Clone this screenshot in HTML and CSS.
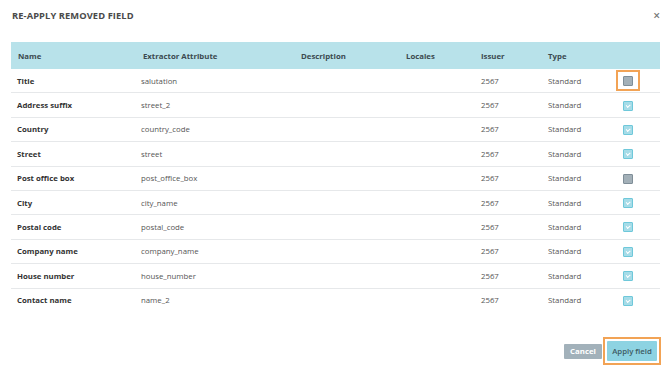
FILE: index.html
```html
<!DOCTYPE html>
<html>
<head>
<meta charset="utf-8">
<link rel="stylesheet" href="styles.css">
</head>
<body>
<div class="modal">
  <div class="modal-head">
    <h1 class="title">RE-APPLY REMOVED FIELD</h1>
    <span class="close">&#215;</span>
  </div>
  <table class="grid">
    <thead>
      <tr>
        <th class="c-name">Name</th>
        <th class="c-attr">Extractor Attribute</th>
        <th class="c-desc">Description</th>
        <th class="c-loc">Locales</th>
        <th class="c-iss">Issuer</th>
        <th class="c-type">Type</th>
        <th class="c-chk"></th>
      </tr>
    </thead>
    <tbody>
      <tr><td class="c-name">Title</td><td>salutation</td><td></td><td></td><td>2567</td><td>Standard</td><td class="c-chk"><span class="focus"><span class="cb"></span></span></td></tr>
      <tr><td class="c-name">Address suffix</td><td>street_2</td><td></td><td></td><td>2567</td><td>Standard</td><td class="c-chk"><span class="cb on"></span></td></tr>
      <tr><td class="c-name">Country</td><td>country_code</td><td></td><td></td><td>2567</td><td>Standard</td><td class="c-chk"><span class="cb on"></span></td></tr>
      <tr><td class="c-name">Street</td><td>street</td><td></td><td></td><td>2567</td><td>Standard</td><td class="c-chk"><span class="cb on"></span></td></tr>
      <tr><td class="c-name">Post office box</td><td>post_office_box</td><td></td><td></td><td>2567</td><td>Standard</td><td class="c-chk"><span class="cb"></span></td></tr>
      <tr><td class="c-name">City</td><td>city_name</td><td></td><td></td><td>2567</td><td>Standard</td><td class="c-chk"><span class="cb on"></span></td></tr>
      <tr><td class="c-name">Postal code</td><td>postal_code</td><td></td><td></td><td>2567</td><td>Standard</td><td class="c-chk"><span class="cb on"></span></td></tr>
      <tr><td class="c-name">Company name</td><td>company_name</td><td></td><td></td><td>2567</td><td>Standard</td><td class="c-chk"><span class="cb on"></span></td></tr>
      <tr><td class="c-name">House number</td><td>house_number</td><td></td><td></td><td>2567</td><td>Standard</td><td class="c-chk"><span class="cb on"></span></td></tr>
      <tr class="last"><td class="c-name">Contact name</td><td>name_2</td><td></td><td></td><td>2567</td><td>Standard</td><td class="c-chk"><span class="cb on"></span></td></tr>
    </tbody>
  </table>
  <div class="actions">
    <button class="btn cancel">Cancel</button>
    <span class="btn-focus"><button class="btn apply">Apply field</button></span>
  </div>
</div>
</body>
</html>
```
FILE: styles.css
```css
html, body {
  margin: 0;
  padding: 0;
  background: #fff;
}
body {
  font-family: "Open Sans", "Liberation Sans", sans-serif;
  color: #555;
}
.modal {
  width: 670px;
  height: 367px;
  padding: 0 9px 0 11px;
  box-sizing: border-box;
  display: flex;
  flex-direction: column;
}
.modal-head {
  display: flex;
  justify-content: space-between;
  align-items: center;
  height: 31px;
  padding-left: 1px;
}
.title {
  margin: 0;
  font-size: 9.3px;
  font-weight: 700;
  color: #4a4a4a;
  letter-spacing: 0.1px;
}
.close {
  font-size: 12px;
  color: #777;
  margin-right: 1px;
  font-weight: 600;
}
.grid {
  margin-top: 11px;
  width: 649px;
  border-collapse: collapse;
  font-size: 7.8px;
}
.grid th {
  background: #b8e2ea;
  height: 27px;
  text-align: left;
  font-weight: 700;
  color: #3b4a50;
  padding: 0;
}
.grid td {
  height: 23.4px;
  padding: 0;
  border-bottom: 1px solid #e6e8ea;
  color: #555;
}
.grid tr.last td {
  border-bottom: none;
}
.grid td.c-name {
  font-weight: 700;
  color: #333;
  padding-left: 6px;
}
.grid th.c-name {
  padding-left: 7px;
  width: 123px;
}
.c-attr { width: 158px; }
.c-desc { width: 105px; }
.c-loc { width: 75px; }
.c-iss { width: 67px; }
.c-type { width: 68px; }
.c-chk { text-align: left; }
.grid th.c-attr { padding-left: 2px; }
td.c-chk { padding-left: 7px !important; }
.cb {
  display: inline-block;
  width: 8px;
  height: 8px;
  border: 1px solid #7f8e98;
  background: #a3b0b8;
  border-radius: 1px;
  vertical-align: middle;
  position: relative;
}
.cb.on {
  border-color: #6ec8da;
  background: #a6dce8;
}
.cb.on::after {
  content: "";
  position: absolute;
  left: 2px;
  top: 2px;
  width: 3px;
  height: 1.5px;
  border-left: 1px solid #fff;
  border-bottom: 1px solid #fff;
  transform: rotate(-40deg);
}
.focus {
  display: inline-block;
  padding: 4px 5px 3px;
  border: 2px solid #f2a355;
  margin-left: -7px;
  line-height: 0;
}
.actions {
  margin-top: auto;
  margin-bottom: 2px;
  display: flex;
  justify-content: flex-end;
  align-items: center;
  gap: 1px;
}
.btn {
  font-family: "Open Sans", "Liberation Sans", sans-serif;
  font-size: 7.8px;
  font-weight: 700;
  border: none;
  border-radius: 1px;
  padding: 0;
  cursor: pointer;
}
.cancel {
  background: #a2b1ba;
  color: #fff;
  width: 38px;
  height: 15px;
}
.btn-focus {
  display: inline-block;
  border: 2px solid #f2a355;
  padding: 2px;
  line-height: 0;
}
.apply {
  background: #8dd3e2;
  color: #3d5a63;
  width: 50px;
  height: 20px;
  font-weight: 600;
}
```
